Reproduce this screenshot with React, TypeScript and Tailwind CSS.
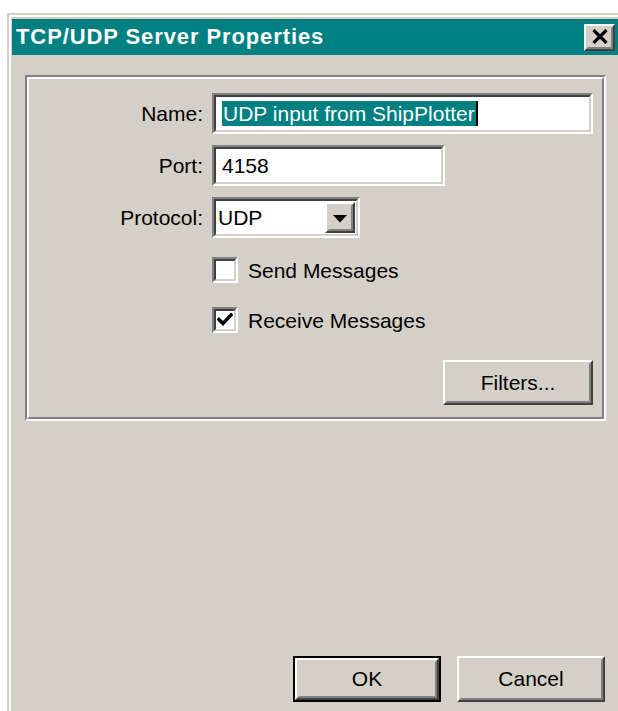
import React from "react";

const FONT = { fontFamily: '"Liberation Sans", Arial, sans-serif' };

// Classic raised 3D bevel used by push buttons
function Raised({ children, className = "" }: { children?: React.ReactNode; className?: string }) {
  return (
    <div className={`border-2 border-t-white border-l-white border-b-[#404040] border-r-[#404040] ${className}`}>
      <div className="w-full h-full border-2 border-t-[#d4d0c8] border-l-[#d4d0c8] border-b-[#808080] border-r-[#808080] flex items-center justify-center">
        {children}
      </div>
    </div>
  );
}

// Classic sunken field (text box, combo, check box)
function Sunken({ children, className = "", innerClass = "" }: { children?: React.ReactNode; className?: string; innerClass?: string }) {
  return (
    <div className={`border-2 border-t-[#808080] border-l-[#808080] border-b-white border-r-white ${className}`}>
      <div className={`w-full h-full border-2 border-t-[#404040] border-l-[#404040] border-b-[#d4d0c8] border-r-[#d4d0c8] bg-white ${innerClass}`}>
        {children}
      </div>
    </div>
  );
}

function Button({ label, isDefault = false }: { label: string; isDefault?: boolean }) {
  if (isDefault) {
    return (
      <div className="w-[148px] h-[46px] border-2 border-black">
        <Raised className="w-full h-full">
          <span className="text-[21px] text-black">{label}</span>
        </Raised>
      </div>
    );
  }
  return (
    <Raised className="w-[148px] h-[46px]">
      <span className="text-[21px] text-black">{label}</span>
    </Raised>
  );
}

function Checkbox({ checked, label }: { checked: boolean; label: string }) {
  return (
    <div className="flex items-center ml-[183px] h-[26px]">
      <Sunken className="w-[26px] h-[26px]" innerClass="flex items-center justify-center">
        {checked && (
          <svg width="16" height="16" viewBox="0 0 16 16">
            <polyline points="2,7.5 6,11.5 14,3" fill="none" stroke="#000" strokeWidth="3.4" strokeLinecap="square" />
          </svg>
        )}
      </Sunken>
      <span className="ml-[10px] text-[21px] text-black leading-none">{label}</span>
    </div>
  );
}

function Row({ label, children }: { label: string; children: React.ReactNode }) {
  return (
    <div className="flex items-center h-[41px]">
      <div className="w-[174px] text-right text-[21px] text-black">{label}</div>
      <div className="ml-[9px] flex items-center">{children}</div>
    </div>
  );
}

export default function App() {
  return (
    <div className="w-[618px] h-[711px] overflow-hidden bg-white" style={FONT}>
      {/* window frame */}
      <div className="ml-[7px] mt-[13px] w-[617px] h-[720px] bg-[#d4d0c8] pl-[2px] pt-[2px] pr-[2px]">
        <div className="h-full border-l-2 border-t-2 border-r-2 border-white bg-[#d4d0c8] pl-[1px] pt-[2px] pr-[1px]">
          {/* caption */}
          <div className="h-[36px] bg-[#008080] flex items-center justify-between pl-[4px] pr-[4px]">
            <span className="text-white font-bold text-[22px] tracking-[0.9px] leading-none">
              TCP/UDP Server Properties
            </span>
            <Raised className="w-[31px] h-[27px] bg-[#d4d0c8]">
              <svg width="16" height="15" viewBox="0 0 16 15" className="-mt-[1px]">
                <line x1="1.5" y1="1" x2="14.5" y2="14" stroke="#000" strokeWidth="3.2" />
                <line x1="14.5" y1="1" x2="1.5" y2="14" stroke="#000" strokeWidth="3.2" />
              </svg>
            </Raised>
          </div>

          {/* client area */}
          <div className="px-[13px] pt-[20px]">
            {/* etched group box */}
            <div className="border-t-2 border-l-2 border-[#808080] border-b-2 border-r-2 border-b-white border-r-white">
              <div className="border-2 border-t-white border-l-white border-b-[#808080] border-r-[#808080] pt-[14px] pb-[12px] pr-[9px] flex flex-col">
                <Row label="Name:">
                  <Sunken className="w-[381px] h-[41px]" innerClass="flex items-center pl-[6px]">
                    <span className="inline-flex h-[25px] items-center bg-[#008080] text-white text-[21px] pl-[1px] pr-[1px] border-r-2 border-black">
                      UDP input from ShipPlotter
                    </span>
                  </Sunken>
                </Row>
                <div className="mt-[11px]">
                  <Row label="Port:">
                    <Sunken className="w-[233px] h-[41px]" innerClass="flex items-center pl-[6px]">
                      <span className="text-[21px] text-black">4158</span>
                    </Sunken>
                  </Row>
                </div>
                <div className="mt-[11px]">
                  <Row label="Protocol:">
                    <Sunken className="w-[148px] h-[41px]" innerClass="flex items-center justify-between pl-[2px] pr-[1px]">
                      <span className="text-[21px] text-black">UDP</span>
                      <Raised className="w-[30px] h-[31px] bg-[#d4d0c8]">
                        <svg width="14" height="8" viewBox="0 0 14 8" className="mt-[2px]">
                          <polygon points="0,0 14,0 7,7.5" fill="#000" />
                        </svg>
                      </Raised>
                    </Sunken>
                  </Row>
                </div>
                <div className="mt-[19px]">
                  <Checkbox checked={false} label="Send Messages" />
                </div>
                <div className="mt-[24px]">
                  <Checkbox checked={true} label="Receive Messages" />
                </div>
                <div className="mt-[27px] flex justify-end">
                  <Raised className="w-[150px] h-[45px]">
                    <span className="text-[21px] text-black">Filters...</span>
                  </Raised>
                </div>
              </div>
            </div>

            {/* dialog buttons */}
            <div className="mt-[235px] flex justify-end gap-[16px] pr-[1px]">
              <Button label="OK" isDefault />
              <Button label="Cancel" />
            </div>
          </div>
        </div>
      </div>
    </div>
  );
}
